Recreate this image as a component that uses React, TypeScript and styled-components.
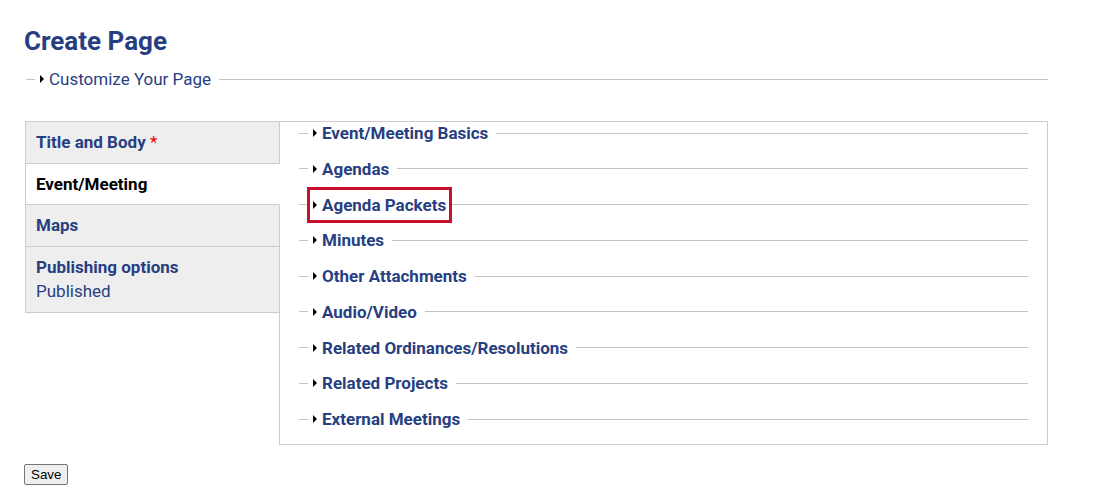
import React from "react";
import styled, { createGlobalStyle } from "styled-components";

const GlobalStyle = createGlobalStyle`
  html, body { margin: 0; padding: 0; background: #fff; }
  body { font-family: Roboto, "Liberation Sans", Arial, sans-serif; }
`;

const NAVY = "#273f81";
const LINE = "#c4c4c4";

const Page = styled.div`
  padding: 26px 52px 0 24px;
  width: 1100px;
  box-sizing: border-box;
`;

const Title = styled.h1`
  margin: 0;
  font-size: 26px;
  line-height: 30px;
  font-weight: 700;
  color: ${NAVY};
`;

const LegendRow = styled.div<{ $compact?: boolean }>`
  display: flex;
  align-items: center;
  height: ${(p) => (p.$compact ? "22px" : "24px")};
`;

const LeadLine = styled.span`
  width: 9px;
  height: 1px;
  background: ${LINE};
  flex: none;
`;

const TailLine = styled.span<{ $flush?: boolean }>`
  flex: 1;
  height: 1px;
  background: ${LINE};
  margin-left: ${(p) => (p.$flush ? "0" : "8px")};
`;

const Triangle = styled.span<{ $inBox?: boolean }>`
  width: 0;
  height: 0;
  border-top: 4px solid transparent;
  border-bottom: 4px solid transparent;
  border-left: 4px solid #000;
  margin: 0 5px 0 ${(p) => (p.$inBox ? "3px" : "5px")};
  flex: none;
`;

const LegendText = styled.span<{ $bold?: boolean }>`
  font-size: 17px;
  color: ${NAVY};
  font-weight: ${(p) => (p.$bold ? 700 : 400)};
  white-space: nowrap;
`;

const Customize = styled.div`
  margin: 11px 0 0 2px;
`;

const Layout = styled.div`
  display: flex;
  margin-top: 30px;
  margin-left: 1px;
`;

const TabList = styled.div`
  width: 255px;
  flex: none;
  margin-right: -1px;
  position: relative;
  z-index: 1;
  align-self: flex-start;
`;

const Tab = styled.div<{ $active?: boolean }>`
  box-sizing: border-box;
  padding: 9px 11px 8.5px 10px;
  line-height: 23px;
  font-size: 17px;
  border: 1px solid #ccc;
  border-top: none;
  &:first-child { border-top: 1px solid #ccc; }
  background: ${(p) => (p.$active ? "#fff" : "#eee")};
  border-right-color: ${(p) => (p.$active ? "#fff" : "#ccc")};
  color: ${(p) => (p.$active ? "#000" : NAVY)};
`;

const TabTitle = styled.div`
  font-weight: 700;
`;

const Star = styled.span`
  color: #e00;
  font-weight: 400;
`;

const TabSub = styled.div`
  font-weight: 400;
  line-height: 25px;
`;

const Panel = styled.div`
  width: 770px;
  height: 324px;
  box-sizing: border-box;
  border: 1px solid #ccc;
  padding: 0 19px;
  display: flex;
  flex-direction: column;
  gap: 13.75px;
`;

const Highlight = styled.span`
  display: flex;
  align-items: center;
  border: 3px solid #c8102e;
  padding: 5px 3px 5px 0;
  margin: -8px 0 -8px -1px;
`;

const SaveButton = styled.button`
  margin-top: 19px;
  font-family: "Liberation Sans", Arial, sans-serif;
  font-size: 13.33px;
  padding: 1px 6px;
  height: 21px;
  background: #efefef;
  border: 1px solid #767676;
  border-radius: 2px;
  color: #000;
`;

const sections = [
  "Event/Meeting Basics",
  "Agendas",
  "Agenda Packets",
  "Minutes",
  "Other Attachments",
  "Audio/Video",
  "Related Ordinances/Resolutions",
  "Related Projects",
  "External Meetings",
];

export default function App() {
  return (
    <>
      <GlobalStyle />
      <Page>
        <Title>Create Page</Title>
        <Customize>
          <LegendRow>
            <LeadLine />
            <Triangle />
            <LegendText>Customize Your Page</LegendText>
            <TailLine />
          </LegendRow>
        </Customize>
        <Layout>
          <TabList>
            <Tab>
              <TabTitle>
                Title and Body <Star>*</Star>
              </TabTitle>
            </Tab>
            <Tab $active>
              <TabTitle>Event/Meeting</TabTitle>
            </Tab>
            <Tab>
              <TabTitle>Maps</TabTitle>
            </Tab>
            <Tab>
              <TabTitle>Publishing options</TabTitle>
              <TabSub>Published</TabSub>
            </Tab>
          </TabList>
          <Panel>
            {sections.map((s) =>
              s === "Agenda Packets" ? (
                <LegendRow $compact key={s}>
                  <LeadLine />
                  <Highlight>
                    <Triangle $inBox />
                    <LegendText $bold>{s}</LegendText>
                  </Highlight>
                  <TailLine $flush />
                </LegendRow>
              ) : (
                <LegendRow $compact key={s}>
                  <LeadLine />
                  <Triangle />
                  <LegendText $bold>{s}</LegendText>
                  <TailLine />
                </LegendRow>
              )
            )}
          </Panel>
        </Layout>
        <SaveButton>Save</SaveButton>
      </Page>
    </>
  );
}
